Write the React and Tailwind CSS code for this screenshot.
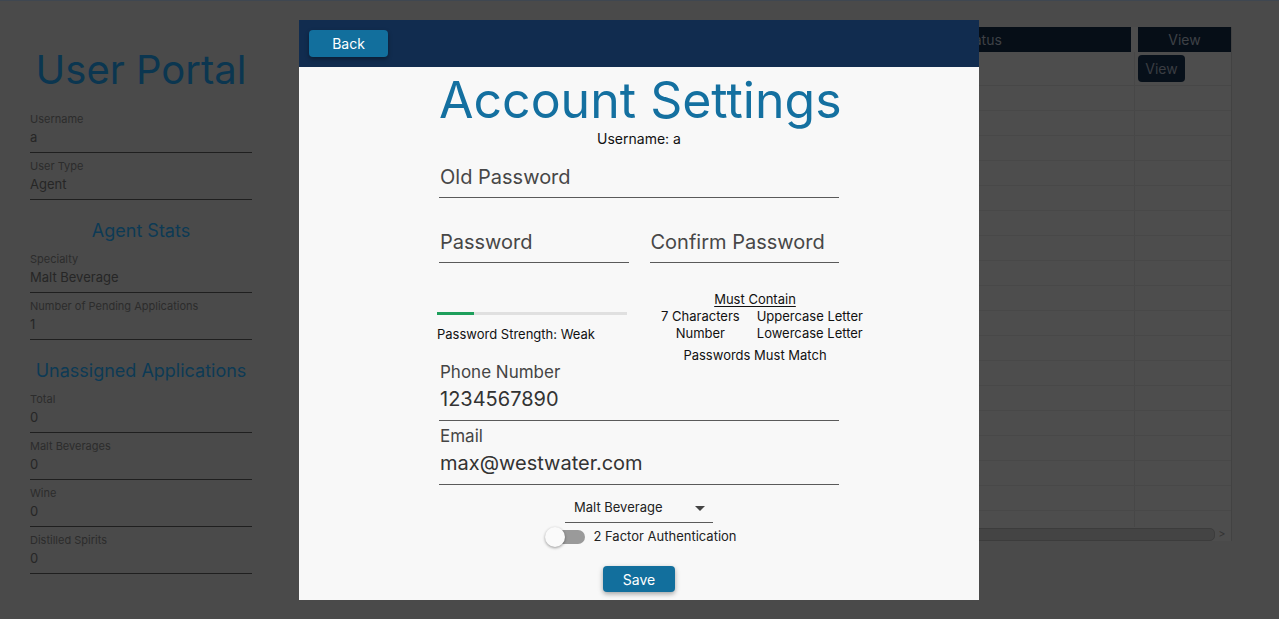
import React from 'react';

const sidebar = [
  { type: 'field', label: 'Username', value: 'a' },
  { type: 'field', label: 'User Type', value: 'Agent' },
  { type: 'heading', text: 'Agent Stats' },
  { type: 'field', label: 'Specialty', value: 'Malt Beverage' },
  { type: 'field', label: 'Number of Pending Applications', value: '1' },
  { type: 'heading', text: 'Unassigned Applications' },
  { type: 'field', label: 'Total', value: '0' },
  { type: 'field', label: 'Malt Beverages', value: '0' },
  { type: 'field', label: 'Wine', value: '0' },
  { type: 'field', label: 'Distilled Spirits', value: '0' },
];

function SideField({ label, value }) {
  return (
    <div className="pt-[6px] pb-[6px] border-b border-[#1f1f1f]">
      <div className="text-[11px] leading-[14px] text-[#2c2c2c]">{label}</div>
      <div className="mt-[2px] text-[13px] leading-[18px] text-[#262626]">{value}</div>
    </div>
  );
}

function Sidebar() {
  return (
    <div className="w-[282px] shrink-0 pl-[30px] pr-[30px]">
      <h1 className="pt-[46px] h-[106px] text-center text-[40px] leading-[48px] text-[#0b3650]">User Portal</h1>
      {sidebar.map((item, i) =>
        item.type === 'field' ? (
          <SideField key={i} label={item.label} value={item.value} />
        ) : (
          <h2 key={i} className="pt-[19px] h-[46px] text-center text-[18px] leading-[24px] text-[#0d3a55]">
            {item.text}
          </h2>
        )
      )}
    </div>
  );
}

const bodyRows = Array.from({ length: 19 });

function BackgroundTable() {
  return (
    <div className="flex-1 pt-[27px] pl-[48px] pr-[47px]">
      <div className="bg-[#4d4d4d] border-r border-[#424242]">
        <div className="flex h-[25px] gap-[7px] text-[14px] text-[#3e4146]">
          <div className="w-[500px] bg-[#060e17]" />
          <div className="flex-1 bg-[#060e17] flex items-center justify-center pr-[6px]">Status</div>
          <div className="w-[93px] bg-[#060e17] flex items-center justify-center">View</div>
        </div>
        <div className="h-[475px] overflow-hidden">
          <div className="flex h-[34px] border-b border-[#474747]">
            <div className="flex-1" />
            <div className="w-[97px] border-l border-[#474747] pl-[3px] pt-[3px]">
              <div className="w-[47px] h-[27px] rounded-[4px] bg-[#07101a] text-[#3a3d42] text-[14px] flex items-center justify-center">
                View
              </div>
            </div>
          </div>
          {bodyRows.map((_, i) => (
            <div key={i} className="flex h-[25px] border-b border-[#484848]">
              <div className="flex-1" />
              <div className="w-[97px] border-l border-[#474747]" />
            </div>
          ))}
        </div>
        <div className="h-[14px] flex items-center pr-[2px]">
          <div className="flex-1 h-[13px] rounded-r-[5px] bg-[#444444] border border-[#3c3c3c]" />
          <span className="w-[14px] text-center text-[11px] leading-none text-[#333]">&gt;</span>
        </div>
      </div>
    </div>
  );
}

function LineInput({ placeholder, className = '' }) {
  return (
    <div className={`border-b border-[#5a5a5a] pb-[8px] pl-[1px] ${className}`}>
      <div className="text-[20px] leading-[24px] text-[#474747]">{placeholder}</div>
    </div>
  );
}

function LabeledField({ label, value }) {
  return (
    <div className="border-b border-[#5a5a5a] pb-[9px] pl-[1px]">
      <div className="text-[17px] leading-[20px] text-[#454545]">{label}</div>
      <div className="mt-[5px] text-[20px] leading-[24px] text-[#333]">{value}</div>
    </div>
  );
}

function Modal() {
  return (
    <div className="absolute left-[299px] top-[20px] w-[680px] h-[580px] bg-[#f8f8f8] flex flex-col">
      <div className="h-[47px] bg-[#112c4f] px-[10px] pt-[10px] shrink-0">
        <button className="w-[79px] h-[27px] rounded-[4px] bg-[#126f9d] text-white text-[14px] shadow-[0_2px_4px_rgba(0,0,0,0.35)]">
          Back
        </button>
      </div>
      <div className="w-[400px] mx-auto flex flex-col">
        <h1 className="pt-[3px] h-[63px] text-center whitespace-nowrap text-[50px] leading-[60px] text-[#1470a0]">
          Account Settings
        </h1>
        <div className="text-center text-[14px] leading-[17px] text-[#111]">Username: a</div>
        <LineInput placeholder="Old Password" className="mt-[18px]" />
        <div className="flex gap-[21px] mt-[32px]">
          <LineInput placeholder="Password" className="flex-1" />
          <LineInput placeholder="Confirm Password" className="flex-1" />
        </div>
        <div className="flex mt-[28px] h-[71px]">
          <div className="w-[190px] shrink-0 -ml-[2px] pt-[21px]">
            <div className="h-[3px] bg-[#e0e0e0] flex">
              <div className="w-[37px] bg-[#1e9f5c]" />
            </div>
            <div className="mt-[11px] text-[13px] leading-[17px] text-[#111]">Password Strength: Weak</div>
          </div>
          <div className="w-[256px] shrink-0 flex flex-col items-center text-[13px] leading-[17px] text-[#111] whitespace-nowrap">
            <div className="underline underline-offset-2">Must Contain</div>
            <div className="grid grid-cols-[auto_auto] gap-x-[17px] ml-[14px]">
              <div className="text-center">7 Characters</div>
              <div className="text-center">Uppercase Letter</div>
              <div className="text-center">Number</div>
              <div className="text-center">Lowercase Letter</div>
            </div>
            <div className="mt-[5px]">Passwords Must Match</div>
          </div>
        </div>
        <LabeledField label="Phone Number" value="1234567890" />
        <div className="mt-[5px]">
          <LabeledField label="Email" value="max@westwater.com" />
        </div>
        <div className="mx-auto mt-[12px] w-[148px] border-b border-[#5a5a5a] h-[26px] pb-[3px] flex items-center pl-[9px] pr-[8px]">
          <span className="flex-1 text-[13px] text-[#222]">Malt Beverage</span>
          <svg width="10" height="5" viewBox="0 0 10 5">
            <path d="M0 0 L10 0 L5 5 Z" fill="#444" />
          </svg>
        </div>
        <div className="mt-[4px] flex items-center justify-center gap-[8px] pl-[4px]">
          <div className="relative w-[40px] h-[20px] flex items-center">
            <div className="ml-[5px] w-[35px] h-[14px] rounded-full bg-[#9a9a9a]" />
            <div className="absolute left-0 top-0 w-[20px] h-[20px] rounded-full bg-[#fafafa] shadow-[0_1px_3px_rgba(0,0,0,0.4)]" />
          </div>
          <span className="text-[13px] text-[#222]">2 Factor Authentication</span>
        </div>
        <button className="mx-auto mt-[19px] w-[72px] h-[26px] rounded-[4px] bg-[#126f9d] text-white text-[14px] shadow-[0_2px_5px_rgba(0,0,0,0.35)]">
          Save
        </button>
      </div>
    </div>
  );
}

export default function App() {
  return (
    <div className="relative w-[1279px] h-[619px] overflow-hidden bg-[#4a4a4a] font-['Inter',sans-serif] shadow-[inset_0_1px_0_#3f4751]">
      <div className="flex h-full">
        <Sidebar />
        <BackgroundTable />
      </div>
      <Modal />
    </div>
  );
}
